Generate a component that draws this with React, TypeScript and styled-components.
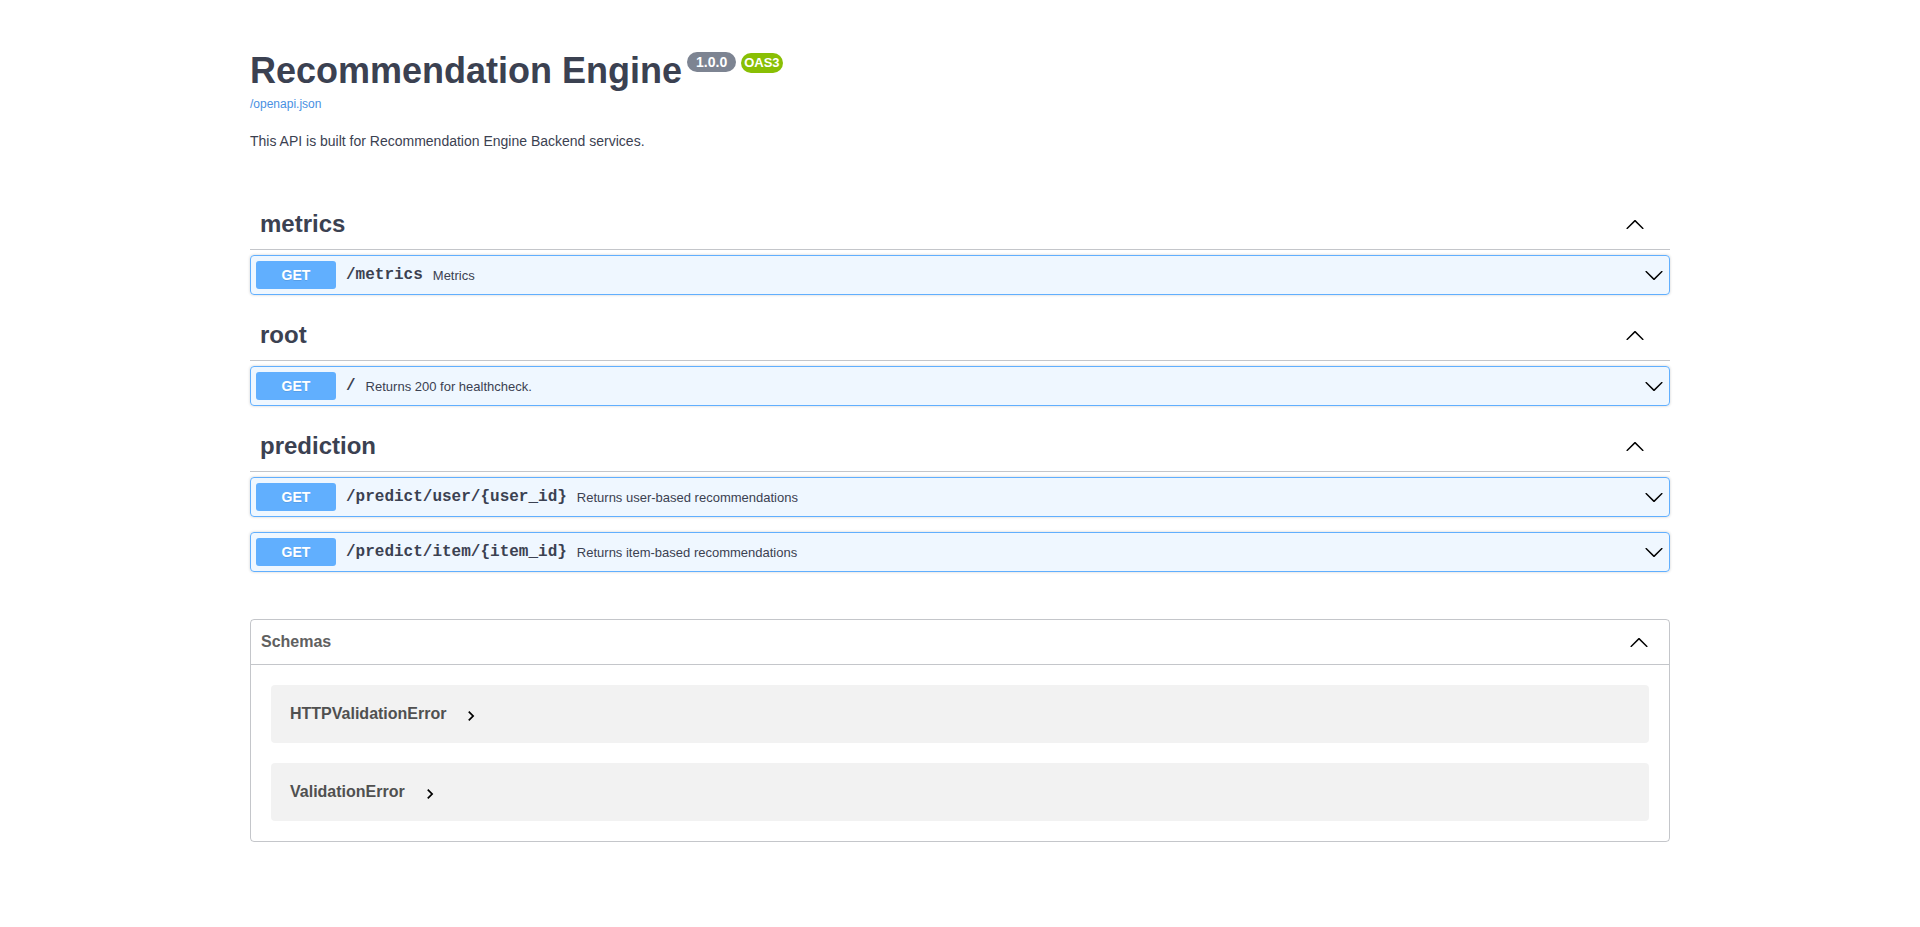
import React from 'react';
import styled, { createGlobalStyle } from 'styled-components';

const GlobalStyle = createGlobalStyle`
	body {
		margin: 0;
		background: #fff;
		font-family: 'Liberation Sans', Arial, sans-serif;
		color: #3b4151;
	}
`;

const Wrapper = styled.div`
	max-width: 1460px;
	margin: 0 auto;
	padding: 0 20px;
	box-sizing: border-box;
`;

const Info = styled.div`
	margin: 50px 0;
`;

const Title = styled.h2`
	margin: 0;
	font-size: 36px;
	font-weight: 700;
	color: #3b4151;
`;

const Badge = styled.small<{ $bg: string; $size: number; $pad: number }>`
	display: inline-block;
	position: relative;
	top: -3px;
	vertical-align: super;
	margin-left: 5px;
	padding: 2px ${(p) => p.$pad}px;
	border-radius: 57px;
	background: ${(p) => p.$bg};
	font-size: 10px;

	pre {
		margin: 0;
		padding: 0;
		font-family: 'Liberation Sans', Arial, sans-serif;
		font-size: ${(p) => p.$size}px;
		line-height: 16px;
		font-weight: 700;
		color: #fff;
	}
`;

const BaseUrl = styled.a`
	display: block;
	margin-top: 5px;
	font-size: 12px;
	color: #4990e2;
	text-decoration: none;
`;

const Description = styled.p`
	margin: 22px 0 0;
	font-size: 14px;
	color: #3b4151;
`;

const TagSection = styled.div`
	display: flex;
	flex-direction: column;
`;

const TagHeader = styled.h3`
	display: flex;
	align-items: center;
	margin: 0 0 5px;
	padding: 10px 25px 10px 10px;
	font-size: 24px;
	line-height: 30px;
	font-weight: 700;
	color: #3b4151;
	border-bottom: 1px solid rgba(59, 65, 81, 0.3);

	span {
		flex: 1;
	}
`;

const OpBlock = styled.div`
	margin: 0 0 15px;
	border: 1px solid #61affe;
	border-radius: 4px;
	background: rgba(97, 175, 254, 0.1);
	box-shadow: 0 0 3px rgba(0, 0, 0, 0.19);
`;

const Summary = styled.div`
	display: flex;
	align-items: center;
	padding: 5px;
`;

const Method = styled.span`
	min-width: 80px;
	padding: 6px 0;
	border-radius: 3px;
	background: #61affe;
	color: #fff;
	font-size: 14px;
	font-weight: 700;
	text-align: center;
	text-shadow: 0 1px 0 rgba(0, 0, 0, 0.1);
`;

const Path = styled.span`
	padding: 0 10px;
	font-family: 'Liberation Mono', 'Courier New', monospace;
	font-size: 16px;
	font-weight: 700;
	color: #3b4151;
`;

const OpDescription = styled.span`
	flex: 1;
	font-size: 13px;
	color: #3b4151;
`;

const Models = styled.section`
	margin: 32px 0;
	border: 1px solid rgba(59, 65, 81, 0.3);
	border-radius: 4px;
`;

const ModelsHeader = styled.h4`
	display: flex;
	align-items: center;
	margin: 0;
	padding: 10px 20px 10px 10px;
	font-size: 16px;
	line-height: 24px;
	font-weight: 700;
	color: #606060;
	border-bottom: 1px solid rgba(59, 65, 81, 0.3);

	span {
		flex: 1;
	}
`;

const ModelList = styled.div`
	display: flex;
	flex-direction: column;
	gap: 20px;
	padding: 20px;
`;

const ModelRow = styled.div`
	display: flex;
	align-items: center;
	height: 58px;
	padding: 0 19px;
	border-radius: 4px;
	background: rgba(0, 0, 0, 0.05);
`;

const ModelTitle = styled.span`
	font-size: 16px;
	font-weight: 700;
	color: #505050;
`;

const Toggle = styled.svg`
	width: 20px;
	height: 20px;
	margin-left: 15px;
	position: relative;
	top: 2px;
`;

const Arrow = styled.svg`
	width: 20px;
	height: 20px;
	flex-shrink: 0;
`;

const ArrowUp = () => (
	<Arrow viewBox="0 0 20 20">
		<path
			fill="#000"
			d="M17.418 14.908c.272.268.709.268.979 0s.271-.701 0-.969l-7.908-7.83c-.27-.268-.707-.268-.979 0l-7.908 7.83c-.27.268-.27.701 0 .969.271.268.709.268.979 0L10 7.767l7.418 7.141z"
		/>
	</Arrow>
);

const ArrowDown = () => (
	<Arrow viewBox="0 0 20 20">
		<path
			fill="#000"
			d="M17.418 6.109c.272-.268.709-.268.979 0s.271.701 0 .969l-7.908 7.83c-.27.268-.707.268-.979 0l-7.908-7.830c-.27-.268-.27-.701 0-.969.271-.268.709-.268.979 0L10 13.25l7.418-7.141z"
		/>
	</Arrow>
);

interface Operation {
	path: string;
	summary: string;
}

interface Tag {
	name: string;
	operations: Operation[];
}

const tags: Tag[] = [
	{ name: 'metrics', operations: [{ path: '/metrics', summary: 'Metrics' }] },
	{ name: 'root', operations: [{ path: '/', summary: 'Returns 200 for healthcheck.' }] },
	{
		name: 'prediction',
		operations: [
			{ path: '/predict/user/{user_id}', summary: 'Returns user-based recommendations' },
			{ path: '/predict/item/{item_id}', summary: 'Returns item-based recommendations' }
		]
	}
];

const schemas = ['HTTPValidationError', 'ValidationError'];

function App() {
	return (
		<>
			<GlobalStyle />
			<Wrapper>
				<Info>
					<Title>
						Recommendation Engine
						<Badge $bg="#7d8492" $size={14} $pad={9}>
							<pre>1.0.0</pre>
						</Badge>
						<Badge $bg="#89bf04" $size={13} $pad={3}>
							<pre>OAS3</pre>
						</Badge>
					</Title>
					<BaseUrl href="#">/openapi.json</BaseUrl>
					<Description>This API is built for Recommendation Engine Backend services.</Description>
				</Info>

				{tags.map((tag) => (
					<TagSection key={tag.name}>
						<TagHeader>
							<span>{tag.name}</span>
							<ArrowUp />
						</TagHeader>
						{tag.operations.map((op) => (
							<OpBlock key={op.path}>
								<Summary>
									<Method>GET</Method>
									<Path>{op.path}</Path>
									<OpDescription>{op.summary}</OpDescription>
									<ArrowDown />
								</Summary>
							</OpBlock>
						))}
					</TagSection>
				))}

				<Models>
					<ModelsHeader>
						<span>Schemas</span>
						<ArrowUp />
					</ModelsHeader>
					<ModelList>
						{schemas.map((name) => (
							<ModelRow key={name}>
								<ModelTitle>{name}</ModelTitle>
								<Toggle viewBox="0 0 24 24">
									<path fill="#000" d="M10 6 8.59 7.41 13.17 12l-4.58 4.59L10 18l6-6z" />
								</Toggle>
							</ModelRow>
						))}
					</ModelList>
				</Models>
			</Wrapper>
		</>
	);
}

export default App;
